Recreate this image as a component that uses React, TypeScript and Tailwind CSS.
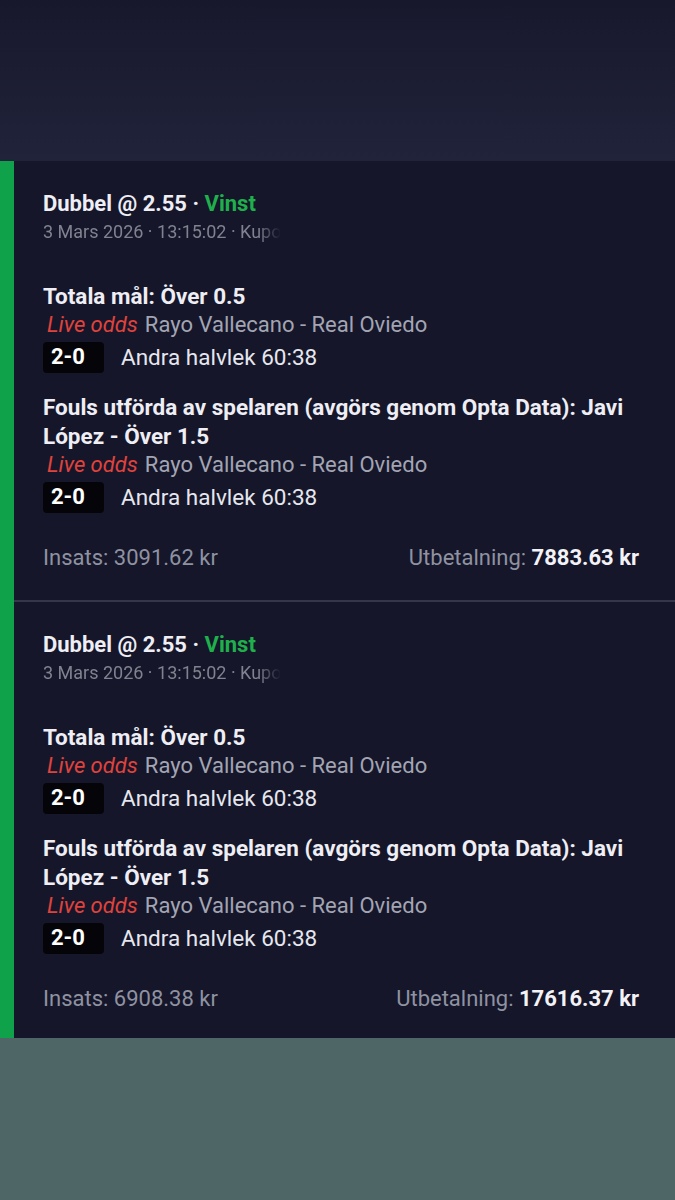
import React from "react";

const font = { fontFamily: "Roboto, 'Noto Sans', sans-serif" };

function ScoreRow() {
  return (
    <div className="mt-[2px] flex h-[32px] items-center">
      <div className="flex h-[31px] w-[61px] items-center rounded-[4px] bg-[#050509] pl-[8px] text-[22px] font-bold leading-[28px] text-white">
        2-0
      </div>
      <div className="ml-[17px] text-[22.5px] leading-[28px] text-[#e6e7ee]">Andra halvlek 60:38</div>
    </div>
  );
}

function LiveRow() {
  return (
    <div className="flex h-[28px] items-center whitespace-nowrap text-[22px] leading-[28px]">
      <span className="pl-[4px] italic text-[#e0433c]">Live odds</span>
      <span className="ml-[7px] text-[#a3a5b3]">Rayo Vallecano - Real Oviedo</span>
    </div>
  );
}

function Card({ stake, payout, last }: { stake: string; payout: string; last?: boolean }) {
  return (
    <div className={`pl-[29px] pr-[36px] pt-[29px] ${last ? "pb-[25px]" : "pb-[28px] border-b-2 border-[#35364b]"}`}>
      <div className="h-[28px] text-[22px] font-bold leading-[28px] text-[#eeeef4]">
        Dubbel @ 2.55 · <span className="text-[#1fb04c]">Vinst</span>
      </div>
      <div className="mt-[2px] flex h-[24px]">
        <span className="whitespace-nowrap text-[18px] leading-[24px] text-[#80838f] [mask-image:linear-gradient(to_right,black_90%,transparent)]">
          3 Mars 2026 · 13:15:02 · Kupo
        </span>
      </div>

      <div className="mt-[38px] text-[22.5px] font-bold leading-[28px] text-[#eeeef4]">Totala mål: Över 0.5</div>
      <div className="mt-[1px]">
        <LiveRow />
      </div>
      <ScoreRow />

      <div className="mt-[20px] text-[22.5px] font-bold leading-[29px] text-[#eeeef4]">
        Fouls utförda av spelaren (avgörs genom Opta Data): Javi López - Över 1.5
      </div>
      <LiveRow />
      <ScoreRow />

      <div className="mt-[31px] flex h-[28px] items-center justify-between text-[22px] leading-[28px] text-[#8f92a0]">
        <span>Insats: {stake}</span>
        <span>
          Utbetalning: <span className="font-bold text-[#f2f2f7]">{payout}</span>
        </span>
      </div>
    </div>
  );
}

export default function App() {
  return (
    <div style={font} className="flex h-[1200px] w-[675px] flex-col bg-[#4e6665]">
      <div className="h-[161px] bg-gradient-to-b from-[#18182d] to-[#20233a]" />
      <div className="border-l-[14px] border-[#0fa24b] bg-[#15162a]">
        <Card stake="3091.62 kr" payout="7883.63 kr" />
        <Card stake="6908.38 kr" payout="17616.37 kr" last />
      </div>
    </div>
  );
}
